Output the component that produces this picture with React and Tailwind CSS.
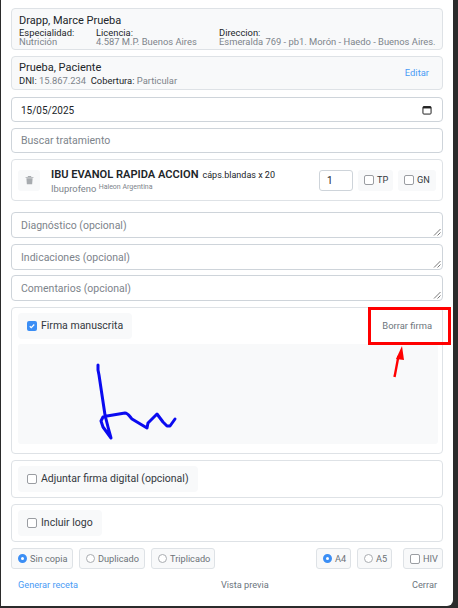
function Check({ checked }) {
  return checked ? (
    <span className="w-[10px] h-[10px] rounded-[2px] bg-[#3b8ef5] flex items-center justify-center shrink-0">
      <svg width="8" height="8" viewBox="0 0 16 16" fill="none"><path d="M3.5 8.5l3 3 6-6.5" stroke="#fff" strokeWidth="2.4" /></svg>
    </span>
  ) : (
    <span className="w-[10px] h-[10px] rounded-[2px] border border-[#9a9da2] bg-white shrink-0" />
  );
}

function Radio({ checked, label, square, className = "" }) {
  return (
    <div className={`h-[21px] flex items-center gap-[3px] rounded-[3px] border border-[#dee2e6] bg-[#f8f9fa] pl-[6px] text-[9.2px] text-[#6c7278] ${className}`}>
      {square ? (
        <Check />
      ) : checked ? (
        <span className="w-[9px] h-[9px] rounded-full border-[3px] border-[#3b8ef5] bg-white shrink-0" />
      ) : (
        <span className="w-[9px] h-[9px] rounded-full border border-[#a9acb0] bg-white shrink-0" />
      )}
      {label}
    </div>
  );
}

function Area({ text, className = "" }) {
  return (
    <div className={`relative h-[26px] rounded-[4px] border border-[#ced4da] bg-white px-[9px] pt-[1px] flex items-center text-[10.5px] text-[#7d848b] ${className}`}>
      {text}
      <svg className="absolute right-[1px] bottom-[1px]" width="8" height="8" viewBox="0 0 8 8"><path d="M1 7.5L7.5 1M4.5 7.5L7.5 4.5" stroke="#555" strokeWidth="0.8" /></svg>
    </div>
  );
}

function ChipCheck({ label, checked }) {
  return (
    <div className="inline-flex items-center gap-[4px] h-[26px] rounded-[4px] bg-[#f8f9fa] px-[9px] text-[10.5px] text-[#33383d]">
      <Check checked={checked} />
      {label}
    </div>
  );
}

export default function App() {
  return (
    <div className="font-['Roboto',sans-serif] relative w-[458px] h-[608px] bg-[#2b2b2b] overflow-hidden">
      <div className="w-[452px] h-[606px] ml-[1px] bg-white rounded-br-[6px] px-[10px] pt-[8px] flex flex-col">
        <div className="h-[42px] shrink-0 rounded-[4px] border border-[#dee2e6] bg-[#f8f9fa] px-[7px] pt-[5px] text-[#212529]">
          <div className="text-[11px] leading-[14px]">Drapp, Marce Prueba</div>
          <div className="flex text-[9.4px] leading-[9px]">
            <div className="w-[77px] shrink-0"><div>Especialidad:</div><div className="text-[#7d848b]">Nutrición</div></div>
            <div className="w-[123px] shrink-0"><div>Licencia:</div><div className="text-[#7d848b]">4.587 M.P. Buenos Aires</div></div>
            <div className="shrink-0"><div>Direccion:</div><div className="text-[#7d848b] whitespace-nowrap">Esmeralda 769 - pb1. Morón - Haedo - Buenos Aires.</div></div>
          </div>
        </div>
        <div className="mt-[6px] h-[34px] shrink-0 rounded-[4px] border border-[#dee2e6] bg-[#f8f9fa] pl-[7px] pr-[13px] flex items-center justify-between text-[#212529]">
          <div className="pt-[1px]">
            <div className="text-[11px] leading-[13px]">Prueba, Paciente</div>
            <div className="text-[9.4px] leading-[13px]">DNI: <span className="text-[#7d848b]">15.867.234</span>&nbsp; Cobertura: <span className="text-[#7d848b]">Particular</span></div>
          </div>
          <span className="text-[9.4px] text-[#4a9bf5]">Editar</span>
        </div>
        <div className="mt-[7px] h-[25px] shrink-0 rounded-[4px] border border-[#ced4da] bg-white pl-[9px] pr-[10px] flex items-center justify-between text-[10px] text-[#212529]">
          <span className="pt-[1px]">15/05/2025</span>
          <svg width="10" height="10" viewBox="0 0 16 16" fill="none"><rect x="1.5" y="2.5" width="13" height="12" rx="1.5" stroke="#222" strokeWidth="1.6" /><rect x="1.5" y="2.5" width="13" height="3" fill="#222" /></svg>
        </div>
        <div className="mt-[6px] h-[25px] shrink-0 rounded-[4px] border border-[#ced4da] bg-white px-[9px] pt-[1px] flex items-center text-[10.5px] text-[#7d848b]">Buscar tratamiento</div>
        <div className="mt-[6px] h-[42px] shrink-0 rounded-[4px] border border-[#dee2e6] bg-white px-[6px] flex items-center">
          <div className="w-[22px] h-[21px] rounded-[3px] bg-[#f8f9fa] flex items-center justify-center shrink-0">
            <svg width="9" height="10" viewBox="0 0 16 16" fill="#a7abaf"><path d="M5.5 1h5l1 1.5H15v1.5H1V2.5h3.5L5.5 1zM2.5 5h11l-.8 10.5H3.3L2.5 5z" /></svg>
          </div>
          <div className="ml-[11px] flex-1 min-w-0 pt-[2px]">
            <div className="text-[#212529] leading-[14px] whitespace-nowrap"><span className="text-[11.1px] font-semibold">IBU EVANOL RAPIDA ACCION</span> <span className="text-[9px]">cáps.blandas x 20</span></div>
            <div className="text-[9.4px] leading-[14px] text-[#7d848b]">Ibuprofeno <sup className="text-[7px]">Haleon Argentina</sup></div>
          </div>
          <div className="w-[34px] h-[21px] rounded-[3px] border border-[#ced4da] flex items-center pl-[7px] text-[10px] text-[#212529] shrink-0">1</div>
          <div className="ml-[5px] h-[21px] w-[35px] rounded-[3px] bg-[#f8f9fa] flex items-center pl-[6px] gap-[3px] text-[9.2px] text-[#33383d] shrink-0"><Check />TP</div>
          <div className="ml-[5px] h-[21px] w-[38px] rounded-[3px] bg-[#f8f9fa] flex items-center pl-[6px] gap-[3px] text-[9.2px] text-[#33383d] shrink-0"><Check />GN</div>
        </div>
        <Area text="Diagnóstico (opcional)" className="mt-[11px] shrink-0" />
        <Area text="Indicaciones (opcional)" className="mt-[6px] shrink-0" />
        <Area text="Comentarios (opcional)" className="mt-[5px] shrink-0" />
        <div className="mt-[6px] h-[147px] shrink-0 rounded-[4px] border border-[#dee2e6] pl-[6px] pr-[4px] pt-[5px]">
          <div className="flex items-center justify-between h-[26px]">
            <ChipCheck label="Firma manuscrita" checked />
            <span className="text-[9.4px] text-[#6c757d] mr-[6px]">Borrar firma</span>
          </div>
          <div className="mt-[5px] h-[100px] rounded-[3px] bg-[#f8f9fa]">
            <svg width="420" height="100" viewBox="0 0 420 100" fill="none">
              <path d="M80 21 L80 26 L81 31 L87 71 L90 83 L93 94 L85 83 L83 77 L85 73 L89 72 L107 69 C110 69 112 73 114 75 L129 84 L130 79 L139 70 L145 78 L149 82 L152 82 L157 75" stroke="#0b0bf0" strokeWidth="3" strokeLinecap="round" strokeLinejoin="round" />
            </svg>
          </div>
        </div>
        <div className="mt-[6px] h-[38px] shrink-0 rounded-[4px] border border-[#dee2e6] px-[6px] flex items-center"><ChipCheck label="Adjuntar firma digital (opcional)" /></div>
        <div className="mt-[6px] h-[38px] shrink-0 rounded-[4px] border border-[#dee2e6] px-[6px] flex items-center"><ChipCheck label="Incluir logo" /></div>
        <div className="mt-[6px] flex items-center shrink-0">
          <Radio checked label="Sin copia" className="w-[62px]" />
          <Radio label="Duplicado" className="ml-[6px] w-[66px]" />
          <Radio label="Triplicado" className="ml-[6px] w-[64px]" />
          <Radio checked label="A4" className="ml-auto w-[35px]" />
          <Radio label="A5" className="ml-[6px] w-[35px]" />
          <Radio square label="HIV" className="ml-[11px] w-[40px]" />
        </div>
        <div className="mt-[9px] flex items-center pl-[7px] pr-[6px] text-[9.2px]">
          <span className="text-[#4a9bf5] w-[203px]">Generar receta</span>
          <span className="text-[#6c757d]">Vista previa</span>
          <span className="text-[#6c757d] ml-auto">Cerrar</span>
        </div>
      </div>
      {/* annotation */}
      <div className="absolute left-[368px] top-[307px] w-[83px] h-[38px] border-[3px] border-[#ff0000]" />
      <svg className="absolute left-[390px] top-[344px]" width="16" height="36" viewBox="0 0 16 36" fill="none"><path d="M4.5 33L8.5 12" stroke="#f00" strokeWidth="2.4" /><path d="M12 2L6 15L14 16Z" fill="#f00" /></svg>
    </div>
  );
}
